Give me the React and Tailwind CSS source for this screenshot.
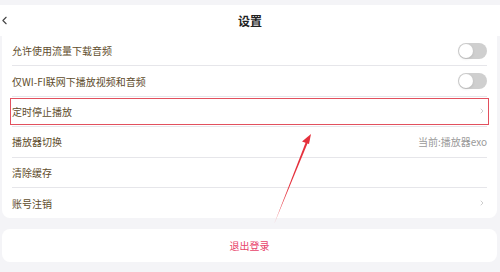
import { ChevronLeft, ChevronRight } from "lucide-react";

const rows = [
  { label: "允许使用流量下载音频", kind: "toggle" },
  { label: "仅WI-FI联网下播放视频和音频", kind: "toggle" },
  { label: "定时停止播放", kind: "arrow", marked: true },
  { label: "播放器切换", kind: "value", value: "当前:播放器exo" },
  { label: "清除缓存", kind: "none" },
  { label: "账号注销", kind: "arrow" },
];

function Toggle() {
  return (
    <div className="w-[29px] h-[16px] rounded-full bg-[#cfcfcf] flex items-center px-[1px]">
      <div className="w-[14px] h-[14px] rounded-full bg-white shadow-sm" />
    </div>
  );
}

export default function App() {
  return (
    <div
      className="relative w-[500px] h-[272px] bg-[#f4f4f7] overflow-hidden"
      style={{ fontFamily: '"Noto Sans CJK SC", "Noto Sans", sans-serif' }}
    >
      <div className="h-[5px]" />
      <div className="h-[31px] bg-white flex items-center justify-center relative">
        <ChevronLeft className="absolute left-[-2px] top-[9px] text-[#444]" size={13} strokeWidth={2} />
        <span className="text-[12px] font-bold text-[#222]">设置</span>
      </div>

      <div className="mx-[2px] mr-[3px] bg-white rounded-b-[8px] px-[10px]">
        {rows.map((r, i) => (
          <div
            key={i}
            className={`relative h-[30.4px] flex items-center justify-between ${i < rows.length - 1 ? "border-b border-[#e6e6ea]" : ""}`}
          >
            <span className="text-[10px] text-[#5e4c2c]">{r.label}</span>
            {r.kind === "toggle" && <Toggle />}
            {r.kind === "arrow" && <ChevronRight size={8} className="text-[#b5b5b5] mr-[1px]" />}
            {r.kind === "value" && <span className="text-[10px] text-[#9a9a9a]">{r.value}</span>}
            {r.marked && (
              <div className="absolute left-[-2px] right-[-2px] top-[1px] bottom-[1px] border-[1.6px] border-[#e2505e]" />
            )}
          </div>
        ))}
      </div>

      <div className="mt-[11px] mx-[2px] mr-[3px] h-[33px] bg-white rounded-[8px] flex items-center justify-center">
        <span className="text-[10px] text-[#e8436a]">退出登录</span>
      </div>

      <svg className="absolute left-0 top-0" width="500" height="272" viewBox="0 0 500 272">
        <path d="M274.5 223 L306.2 141 L308.2 141.8 Z" fill="#e5303c" />
        <path d="M311 134 L302 141.5 L309 144 Z" fill="#e5303c" />
      </svg>
    </div>
  );
}
